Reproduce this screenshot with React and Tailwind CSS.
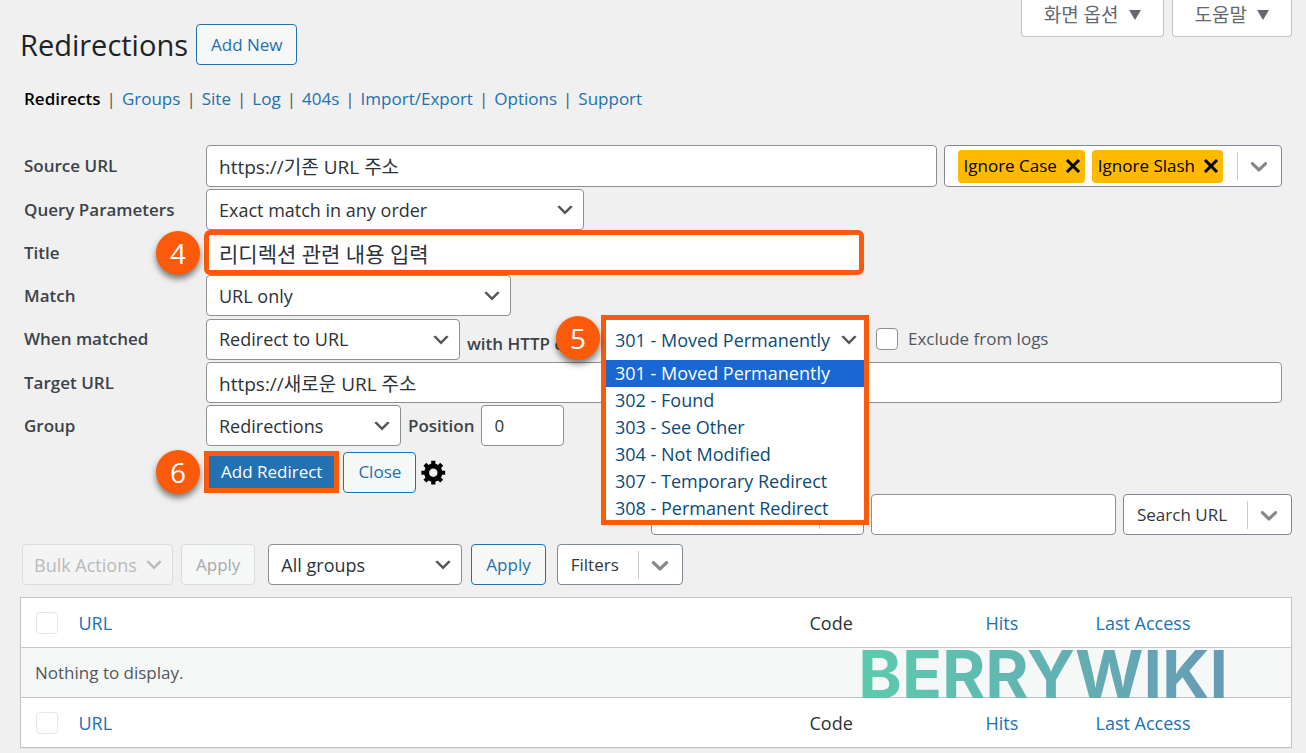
import React, { useState } from 'react'

const NAV_ITEMS = ['Groups', 'Site', 'Log', '404s', 'Import/Export', 'Options', 'Support']

const HTTP_CODES = [
  '301 - Moved Permanently',
  '302 - Found',
  '303 - See Other',
  '304 - Not Modified',
  '307 - Temporary Redirect',
  '308 - Permanent Redirect',
]

const fieldClass = 'rounded border border-[#8c8f94] bg-white px-3 text-[#2c3338]'
const buttonClass = 'h-[41px] rounded border border-[#2271b1] bg-[#f6f7f7] px-3.5 text-[#2271b1]'

const Chevron = ({ className }) => (
  <svg viewBox="0 0 20 20" className={className} fill="currentColor" aria-hidden="true">
    <path d="M5 6l5 5 5-5 2 1-7 7-7-7 2-1z" />
  </svg>
)

const RoundChevron = () => (
  <svg viewBox="0 0 20 20" className="w-7 h-7" fill="currentColor" aria-hidden="true">
    <path d="M4.516 7.548c0.436-0.446 1.043-0.481 1.576 0l3.908 3.747 3.908-3.747c0.533-0.481 1.141-0.446 1.574 0 0.436 0.445 0.408 1.197 0 1.615-0.406 0.418-4.695 4.502-4.695 4.502-0.217 0.223-0.502 0.335-0.787 0.335s-0.57-0.112-0.789-0.335c0 0-4.287-4.084-4.695-4.502s-0.436-1.17 0-1.615z" />
  </svg>
)

const SelectBox = ({ id, label, options, width, disabled }) => (
  <div className={`relative shrink-0 text-lg ${width}`}>
    <select
      id={id}
      aria-label={label}
      disabled={disabled}
      className={
        disabled
          ? 'appearance-none block w-full h-[41px] rounded border border-[#dcdcde] bg-[#f4f4f4] px-[11px] text-[#b8babd] opacity-100'
          : `appearance-none block w-full h-[41px] ${fieldClass}`
      }
    >
      {options.map((o) => <option key={o}>{o}</option>)}
    </select>
    <Chevron
      className={`absolute right-2 top-[10px] w-[22px] h-[22px] pointer-events-none ${disabled ? 'text-[#b8babd]' : 'text-[#555]'}`}
    />
  </div>
)

// Select with a divider in front of the arrow
const SplitSelect = ({ label, option, width }) => (
  <div className={`relative shrink-0 ${width}`}>
    <select
      aria-label={label}
      className="appearance-none block w-full h-[41px] rounded border border-[#7e8993] bg-white px-[13px] text-[#32373c]"
    >
      <option>{option}</option>
    </select>
    <div className="absolute right-[9px] top-[7px] flex items-center gap-[7px] pointer-events-none text-[#888]">
      <span className="w-px h-7 bg-[#ccc]" />
      <RoundChevron />
    </div>
  </div>
)

const Step = ({ children, className }) => (
  <span
    className={`absolute z-20 flex items-center justify-center w-11 h-11 rounded-full bg-[#fa5a0a] text-white text-[28px] font-normal shadow-[0_4px_6px_rgba(0,0,0,0.5)] ${className}`}
  >
    {children}
  </span>
)

const Row = ({ label, htmlFor, children }) => (
  <div className="flex items-center">
    <label htmlFor={htmlFor} className="w-[182px] shrink-0 font-semibold text-[#3c434a]">
      {label}
    </label>
    <div className="relative flex flex-1 items-center gap-[7px]">{children}</div>
  </div>
)

const Tag = ({ children }) => (
  <span className="flex items-center gap-2 h-[33px] rounded bg-[#ffb900] pl-1.5 pr-1 text-black whitespace-nowrap">
    {children}
    <button type="button" aria-label={`Remove ${children}`}>
      <svg viewBox="0 0 16 16" className="w-4 h-4" stroke="currentColor" strokeWidth="3" aria-hidden="true">
        <path d="M2 2l12 12M14 2L2 14" />
      </svg>
    </button>
  </span>
)

const ScreenTab = ({ children }) => (
  <button
    type="button"
    className="flex items-center gap-2.5 h-[37px] pb-1.5 px-[22px] rounded-b border border-t-0 border-[#c3c4c7] bg-white text-[#646970] text-[19px]"
  >
    {children}
    <svg viewBox="0 0 12 10" className="w-3 h-2.5" fill="currentColor" aria-hidden="true">
      <path d="M0 0h12L6 10z" />
    </svg>
  </button>
)

const HeadRow = () => (
  <tr className="h-[50px] text-left text-lg text-[#2271b1]">
    <th className="w-[58px] pl-[15px] font-normal">
      <input
        type="checkbox"
        aria-label="Select all"
        className="block appearance-none w-[22px] h-[22px] rounded border border-[#e6e6e7] bg-white"
      />
    </th>
    <th className="font-normal"><a href="#url">URL</a></th>
    <th className="w-[176px] font-normal text-[#2c3338]">Code</th>
    <th className="w-[110px] font-normal"><a href="#hits">Hits</a></th>
    <th className="w-[196px] font-normal"><a href="#last-access">Last Access</a></th>
  </tr>
)

const CodePicker = () => {
  const [code, setCode] = useState(HTTP_CODES[0])

  return (
    <div className="relative w-[266px] h-[42px] shrink-0 text-lg">
      <div className="absolute z-10 -left-0.5 -top-[3px] w-[268px] border-5 border-[#fa5a0a] bg-white text-[#0a4b78]">
        <div className="relative">
          <select
            id="code"
            value={code}
            onChange={(e) => setCode(e.target.value)}
            className="appearance-none block w-full h-10 px-[9px] bg-white"
          >
            {HTTP_CODES.map((c) => <option key={c}>{c}</option>)}
          </select>
          <Chevron className="absolute right-1 top-[9px] w-[22px] h-[22px] text-[#555] pointer-events-none" />
        </div>
        <ul role="listbox" aria-label="HTTP codes" className="h-40 overflow-hidden">
          {HTTP_CODES.map((c) => (
            <li
              key={c}
              role="option"
              aria-selected={c === code}
              onClick={() => setCode(c)}
              className={`h-[27px] px-[9px] leading-[27px] ${c === code ? 'bg-[#1967d2] text-white' : ''}`}
            >
              {c}
            </li>
          ))}
        </ul>
      </div>
    </div>
  )
}

const App = () => {
  return (
    <div className="min-h-screen bg-[#f0f0f0] pl-5 pr-3.5 pb-1 font-['Open_Sans','Noto_Sans_CJK_KR',sans-serif] text-[17px] leading-6 text-[#3c434a]">
      <header className="flex items-start justify-between">
        <div className="flex items-center gap-2 pt-6">
          <h1 className="text-[29px] leading-10 text-[#1d2327]">Redirections</h1>
          <button type="button" className={buttonClass}>Add New</button>
        </div>
        <div className="flex gap-2">
          <ScreenTab>화면 옵션</ScreenTab>
          <ScreenTab>도움말</ScreenTab>
        </div>
      </header>

      <nav className="flex gap-1.5 mt-[22px] pl-1 text-[#50575e]">
        <a href="#redirects" className="font-semibold text-black">Redirects</a>
        {NAV_ITEMS.map((item) => (
          <React.Fragment key={item}>
            <span>|</span>
            <a href={`#${item}`} className="text-[#2271b1]">{item}</a>
          </React.Fragment>
        ))}
      </nav>

      <form className="flex flex-col gap-0.5 mt-[34px] pl-1 pr-2.5">
        <Row label="Source URL" htmlFor="source">
          <input
            id="source"
            type="text"
            defaultValue="https://기존 URL 주소"
            className={`flex-1 h-[42px] text-[19px] ${fieldClass}`}
          />
          <div className="flex items-center h-[42px] rounded border border-[#7e8993] bg-white pl-[13px] pr-2">
            <div className="flex gap-[7px]">
              <Tag>Ignore Case</Tag>
              <Tag>Ignore Slash</Tag>
            </div>
            <span className="w-px h-7 ml-3.5 mr-[7px] bg-[#ccc]" />
            <button type="button" aria-label="Show flags" className="text-[#888]"><RoundChevron /></button>
          </div>
        </Row>
        <Row label="Query Parameters" htmlFor="query">
          <SelectBox id="query" width="w-[378px]" options={['Exact match in any order']} />
        </Row>
        <Row label="Title" htmlFor="title">
          <Step className="-left-[50px]">4</Step>
          <input
            id="title"
            type="text"
            defaultValue="리디렉션 관련 내용 입력"
            className={`w-[656px] h-[41px] text-[21px] outline-5 -outline-offset-3 outline-[#fa5a0a] ${fieldClass}`}
          />
        </Row>
        <Row label="Match" htmlFor="match">
          <SelectBox id="match" width="w-[305px]" options={['URL only']} />
        </Row>
        <Row label="When matched" htmlFor="matched">
          <SelectBox id="matched" width="w-[254px]" options={['Redirect to URL']} />
          <label htmlFor="code" className="relative self-end w-[129px] shrink-0 font-semibold leading-8 whitespace-nowrap">
            with HTTP code
            <Step className="-right-1 -top-3">5</Step>
          </label>
          <CodePicker />
          <label className="flex items-center gap-2.5 text-[#50575e]">
            <input type="checkbox" className="appearance-none w-[22px] h-[22px] rounded border border-[#8c8f94] bg-white" />
            Exclude from logs
          </label>
        </Row>
        <Row label="Target URL" htmlFor="target">
          <input
            id="target"
            type="text"
            defaultValue="https://새로운 URL 주소"
            className={`flex-1 h-[41px] text-[19px] ${fieldClass}`}
          />
        </Row>
        <Row label="Group" htmlFor="group">
          <SelectBox id="group" width="w-[195px]" options={['Redirections']} />
          <label htmlFor="position" className="font-semibold">Position</label>
          <input id="position" type="text" defaultValue="0" className={`w-[83px] h-[41px] ${fieldClass}`} />
        </Row>
        <div className="relative flex items-center gap-1 mt-[3px] pl-[180px]">
          <Step className="left-[132px]">6</Step>
          <button type="button" className="h-[42px] px-3 border-5 border-[#fa5a0a] bg-[#2271b1] text-white">
            Add Redirect
          </button>
          <button type="button" className={buttonClass}>Close</button>
          <button type="button" aria-label="Settings" className="text-black">
            <svg viewBox="0 0 20 20" className="w-7 h-7" fill="currentColor" aria-hidden="true">
              <path d="M18 12h-2.18c-.17.7-.44 1.35-.81 1.93l1.54 1.54-2.1 2.1-1.54-1.54c-.58.36-1.23.63-1.91.79V19H8v-2.18c-.68-.16-1.33-.43-1.91-.79l-1.54 1.54-2.12-2.12 1.54-1.54c-.36-.58-.63-1.23-.79-1.91H1V9.03h2.17c.16-.7.44-1.35.8-1.94L2.43 5.55l2.1-2.1 1.54 1.54c.58-.37 1.24-.64 1.93-.81V2h3v2.18c.68.16 1.33.43 1.91.79l1.54-1.54 2.12 2.12-1.54 1.54c.36.59.64 1.24.8 1.94H18V12zm-8.5 1.5c1.66 0 3-1.34 3-3s-1.34-3-3-3-3 1.34-3 3 1.34 3 3 3z" />
            </svg>
          </button>
        </div>
      </form>

      <div className="flex justify-end gap-[7px] mt-px">
        <SplitSelect label="Display" option="" width="w-[213px]" />
        <input type="search" aria-label="Search" className={`w-[245px] h-[41px] ${fieldClass}`} />
        <SplitSelect label="Search by" option="Search URL" width="w-[169px]" />
      </div>

      <div className="flex mt-[9px] pl-0.5">
        <SelectBox label="Bulk actions" width="w-[151px]" options={['Bulk Actions']} disabled />
        <button type="button" disabled className="h-[41px] ml-2 px-3.5 rounded border border-[#dcdcde] bg-[#f6f7f7] text-[#a7aaad]">
          Apply
        </button>
        <div className="flex gap-[9px] ml-[13px]">
          <SelectBox label="Groups" width="w-[194px]" options={['All groups']} />
          <button type="button" className={buttonClass}>Apply</button>
        </div>
        <div className="ml-[11px]">
          <SplitSelect label="Filters" option="Filters" width="w-[126px]" />
        </div>
      </div>

      <div className="relative mt-3">
        <table className="w-full table-fixed border-collapse border border-[#c3c4c7] bg-white shadow-[0_1px_1px_rgba(0,0,0,0.04)]">
          <thead><HeadRow /></thead>
          <tbody>
            <tr className="h-[50px] border-y border-[#c3c4c7] bg-[#f6f7f7] text-[#50575e]">
              <td colSpan={5} className="pl-3.5">Nothing to display.</td>
            </tr>
          </tbody>
          <tfoot><HeadRow /></tfoot>
        </table>
        <p className="absolute right-16 top-[52px] bg-linear-to-r from-[#5bcbad] to-[#679ab5] bg-clip-text font-['Inter',sans-serif] text-[66px] leading-[50px] font-bold text-transparent pointer-events-none">
          BERRYWIKI
        </p>
      </div>
    </div>
  )
}

export default App
